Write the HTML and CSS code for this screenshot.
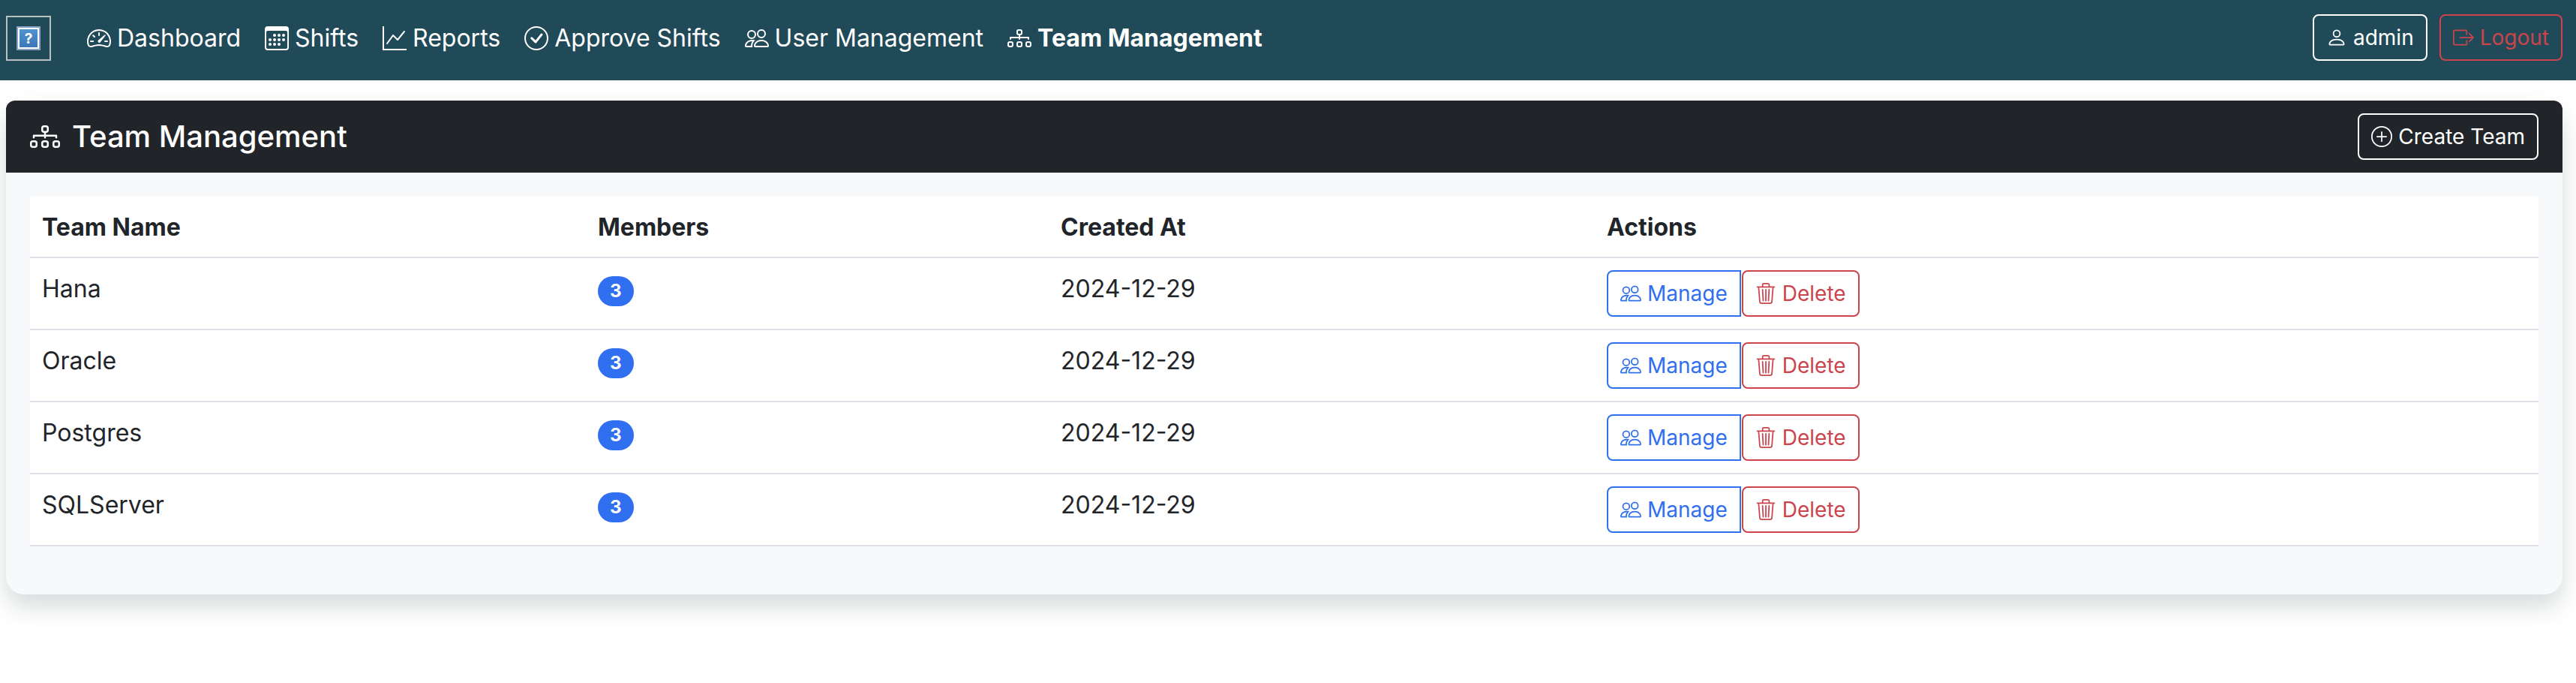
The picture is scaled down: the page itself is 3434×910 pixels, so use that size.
FILE: index.html
```html
<!DOCTYPE html>
<html lang="en">
<head>
  <meta charset="UTF-8">
  <title>Team Management</title>
  <link rel="stylesheet" href="styles.css">
</head>
<body>
  <!-- icons used more than once -->
  <svg class="sprite" xmlns="http://www.w3.org/2000/svg">
    <symbol id="i-diagram" viewBox="0 0 16 16"><path fill-rule="evenodd" d="M6 3.5A1.5 1.5 0 0 1 7.5 2h1A1.5 1.5 0 0 1 10 3.5v1A1.5 1.5 0 0 1 8.5 6v1H14a.5.5 0 0 1 .5.5v1a.5.5 0 0 1-1 0V8h-5v.5a.5.5 0 0 1-1 0V8h-5v.5a.5.5 0 0 1-1 0v-1A.5.5 0 0 1 2 7h5.5V6A1.5 1.5 0 0 1 6 4.5v-1zM8.5 5a.5.5 0 0 0 .5-.5v-1a.5.5 0 0 0-.5-.5h-1a.5.5 0 0 0-.5.5v1a.5.5 0 0 0 .5.5h1zM0 11.5A1.5 1.5 0 0 1 1.5 10h1A1.5 1.5 0 0 1 4 11.5v1A1.5 1.5 0 0 1 2.5 14h-1A1.5 1.5 0 0 1 0 12.5v-1zm1.5-.5a.5.5 0 0 0-.5.5v1a.5.5 0 0 0 .5.5h1a.5.5 0 0 0 .5-.5v-1a.5.5 0 0 0-.5-.5h-1zm4.5.5A1.5 1.5 0 0 1 7.5 10h1a1.5 1.5 0 0 1 1.5 1.5v1A1.5 1.5 0 0 1 8.5 14h-1A1.5 1.5 0 0 1 6 12.5v-1zm1.5-.5a.5.5 0 0 0-.5.5v1a.5.5 0 0 0 .5.5h1a.5.5 0 0 0 .5-.5v-1a.5.5 0 0 0-.5-.5h-1zm4.5.5a1.5 1.5 0 0 1 1.5-1.5h1a1.5 1.5 0 0 1 1.5 1.5v1a1.5 1.5 0 0 1-1.5 1.5h-1a1.5 1.5 0 0 1-1.5-1.5v-1zm1.5-.5a.5.5 0 0 0-.5.5v1a.5.5 0 0 0 .5.5h1a.5.5 0 0 0 .5-.5v-1a.5.5 0 0 0-.5-.5h-1z"/></symbol>
    <symbol id="i-people" viewBox="0 0 16 16"><path d="M15 14s1 0 1-1-1-4-5-4-5 3-5 4 1 1 1 1h8Zm-7.978-1A.261.261 0 0 1 7 12.996c.001-.264.167-1.03.76-1.72C8.312 10.629 9.282 10 11 10c1.717 0 2.687.63 3.24 1.276.593.69.758 1.457.76 1.72l-.008.002a.274.274 0 0 1-.014.002H7.022ZM11 7a2 2 0 1 0 0-4 2 2 0 0 0 0 4Zm3-2a3 3 0 1 1-6 0 3 3 0 0 1 6 0ZM6.936 9.28a5.88 5.88 0 0 0-1.23-.247A7.35 7.35 0 0 0 5 9c-4 0-5 3-5 4 0 .667.333 1 1 1h4.216A2.238 2.238 0 0 1 5 13c0-1.01.377-2.042 1.09-2.904.243-.294.526-.569.846-.816ZM4.92 10A5.493 5.493 0 0 0 4 13H1c0-.26.164-1.03.76-1.724.545-.636 1.492-1.256 3.16-1.275ZM1.5 5.5a3 3 0 1 1 6 0 3 3 0 0 1-6 0Zm3-2a2 2 0 1 0 0 4 2 2 0 0 0 0-4Z"/></symbol>
    <symbol id="i-trash" viewBox="0 0 16 16"><path d="M6.5 1h3a.5.5 0 0 1 .5.5v1H6v-1a.5.5 0 0 1 .5-.5ZM11 2.5v-1A1.5 1.5 0 0 0 9.5 0h-3A1.5 1.5 0 0 0 5 1.5v1H1.5a.5.5 0 0 0 0 1h.538l.853 10.66A2 2 0 0 0 4.885 16h6.23a2 2 0 0 0 1.994-1.84l.853-10.66h.538a.5.5 0 0 0 0-1H11Zm1.958 1-.846 10.58a1 1 0 0 1-.997.92h-6.23a1 1 0 0 1-.997-.92L3.042 3.5h9.916Zm-7.487 1a.5.5 0 0 1 .528.47l.5 8.5a.5.5 0 0 1-.998.06L5 5.03a.5.5 0 0 1 .47-.53Zm5.058 0a.5.5 0 0 1 .47.53l-.5 8.5a.5.5 0 1 1-.998-.06l.5-8.5a.5.5 0 0 1 .528-.47ZM8 4.5a.5.5 0 0 1 .5.5v8.5a.5.5 0 0 1-1 0V5a.5.5 0 0 1 .5-.5Z"/></symbol>
  </svg>

  <nav class="navbar">
    <a class="brand" href="#">
      <svg class="brand-img" viewBox="0 0 32 32" xmlns="http://www.w3.org/2000/svg">
        <defs>
          <linearGradient id="brokenBlue" x1="0" y1="0" x2="0" y2="1">
            <stop offset="0" stop-color="#4f93cf"/>
            <stop offset="1" stop-color="#3a78b6"/>
          </linearGradient>
        </defs>
        <rect width="32" height="32" fill="#86a2c8"/>
        <rect x="2" y="2" width="28" height="28" fill="#fff"/>
        <rect x="4" y="4" width="24" height="24" fill="url(#brokenBlue)"/>
        <text x="16" y="23" class="brand-mark">?</text>
      </svg>
    </a>
    <ul class="nav-links">
      <li><a href="#" class="nav-link">
        <svg class="icon" viewBox="0 0 16 16"><path d="M8 4a.5.5 0 0 1 .5.5V6a.5.5 0 0 1-1 0V4.5A.5.5 0 0 1 8 4zM3.732 5.732a.5.5 0 0 1 .707 0l.915.914a.5.5 0 1 1-.708.708l-.914-.915a.5.5 0 0 1 0-.707zM2 10a.5.5 0 0 1 .5-.5h1.586a.5.5 0 0 1 0 1H2.5A.5.5 0 0 1 2 10zm9.5 0a.5.5 0 0 1 .5-.5h1.5a.5.5 0 0 1 0 1H12a.5.5 0 0 1-.5-.5zm.754-4.246a.389.389 0 0 0-.527-.02L7.547 9.31a.91.91 0 1 0 1.302 1.258l3.434-4.297a.389.389 0 0 0-.029-.518z"/><path fill-rule="evenodd" d="M0 10a8 8 0 1 1 15.547 2.661c-.442 1.253-1.845 1.602-2.932 1.25C11.309 13.488 9.475 13 8 13c-1.474 0-3.31.488-4.615.911-1.087.352-2.49.003-2.932-1.25A7.988 7.988 0 0 1 0 10zm8-7a7 7 0 0 0-6.603 9.329c.203.575.923.876 1.68.63C4.397 12.533 6.358 12 8 12s3.604.532 4.923.96c.757.245 1.477-.056 1.68-.631A7 7 0 0 0 8 3z"/></svg>
        Dashboard</a></li>
      <li><a href="#" class="nav-link">
        <svg class="icon" viewBox="0 0 16 16"><path d="M14 0H2a2 2 0 0 0-2 2v12a2 2 0 0 0 2 2h12a2 2 0 0 0 2-2V2a2 2 0 0 0-2-2zM1 3.857C1 3.384 1.448 3 2 3h12c.552 0 1 .384 1 .857v10.286c0 .473-.448.857-1 .857H2c-.552 0-1-.384-1-.857V3.857z"/><path d="M6.5 7a1 1 0 1 0 0-2 1 1 0 0 0 0 2zm3 0a1 1 0 1 0 0-2 1 1 0 0 0 0 2zm3 0a1 1 0 1 0 0-2 1 1 0 0 0 0 2zm-9 3a1 1 0 1 0 0-2 1 1 0 0 0 0 2zm3 0a1 1 0 1 0 0-2 1 1 0 0 0 0 2zm3 0a1 1 0 1 0 0-2 1 1 0 0 0 0 2zm3 0a1 1 0 1 0 0-2 1 1 0 0 0 0 2zm-9 3a1 1 0 1 0 0-2 1 1 0 0 0 0 2zm3 0a1 1 0 1 0 0-2 1 1 0 0 0 0 2zm3 0a1 1 0 1 0 0-2 1 1 0 0 0 0 2z"/></svg>
        Shifts</a></li>
      <li><a href="#" class="nav-link">
        <svg class="icon" viewBox="0 0 16 16"><path fill-rule="evenodd" d="M0 0h1v15h15v1H0V0Zm14.817 3.113a.5.5 0 0 1 .07.704l-4.5 5.5a.5.5 0 0 1-.74.037L7.06 6.767l-3.656 5.027a.5.5 0 0 1-.808-.588l4-5.5a.5.5 0 0 1 .758-.06l2.609 2.61 4.15-5.073a.5.5 0 0 1 .704-.07Z"/></svg>
        Reports</a></li>
      <li><a href="#" class="nav-link">
        <svg class="icon" viewBox="0 0 16 16"><path d="M8 15A7 7 0 1 1 8 1a7 7 0 0 1 0 14zm0 1A8 8 0 1 0 8 0a8 8 0 0 0 0 16z"/><path d="M10.97 4.97a.235.235 0 0 0-.02.022L7.477 9.417 5.384 7.323a.75.75 0 0 0-1.06 1.06L6.97 11.03a.75.75 0 0 0 1.079-.02l3.992-4.99a.75.75 0 0 0-1.071-1.05z"/></svg>
        Approve Shifts</a></li>
      <li><a href="#" class="nav-link">
        <svg class="icon"><use href="#i-people"/></svg>
        User Management</a></li>
      <li><a href="#" class="nav-link active">
        <svg class="icon"><use href="#i-diagram"/></svg>
        Team Management</a></li>
    </ul>
    <div class="nav-user">
      <a href="#" class="btn btn-white">
        <svg class="icon" viewBox="0 0 16 16"><path d="M8 8a3 3 0 1 0 0-6 3 3 0 0 0 0 6Zm2-3a2 2 0 1 1-4 0 2 2 0 0 1 4 0Zm4 8c0 1-1 1-1 1H3s-1 0-1-1 1-4 6-4 6 3 6 4Zm-1-.004c-.001-.246-.154-.986-.832-1.664C11.516 10.68 10.289 10 8 10c-2.29 0-3.516.68-4.168 1.332-.678.678-.83 1.418-.832 1.664h10Z"/></svg>
        admin</a>
      <a href="#" class="btn btn-red">
        <svg class="icon" viewBox="0 0 16 16"><path fill-rule="evenodd" d="M10 12.5a.5.5 0 0 1-.5.5h-8a.5.5 0 0 1-.5-.5v-9a.5.5 0 0 1 .5-.5h8a.5.5 0 0 1 .5.5v2a.5.5 0 0 0 1 0v-2A1.5 1.5 0 0 0 9.5 2h-8A1.5 1.5 0 0 0 0 3.5v9A1.5 1.5 0 0 0 1.5 14h8a1.5 1.5 0 0 0 1.5-1.5v-2a.5.5 0 0 0-1 0v2z"/><path fill-rule="evenodd" d="M15.854 8.354a.5.5 0 0 0 0-.708l-3-3a.5.5 0 0 0-.708.708L14.293 7.5H5.5a.5.5 0 0 0 0 1h8.793l-2.147 2.146a.5.5 0 0 0 .708.708l3-3z"/></svg>
        Logout</a>
    </div>
  </nav>

  <main class="card">
    <div class="card-header">
      <h1 class="card-title"><svg class="icon"><use href="#i-diagram"/></svg> Team Management</h1>
      <a href="#" class="btn btn-white">
        <svg class="icon" viewBox="0 0 16 16"><path d="M8 15A7 7 0 1 1 8 1a7 7 0 0 1 0 14zm0 1A8 8 0 1 0 8 0a8 8 0 0 0 0 16z"/><path d="M8 4a.5.5 0 0 1 .5.5v3h3a.5.5 0 0 1 0 1h-3v3a.5.5 0 0 1-1 0v-3h-3a.5.5 0 0 1 0-1h3v-3A.5.5 0 0 1 8 4z"/></svg>
        Create Team</a>
    </div>
    <div class="card-body">
      <table class="team-table">
        <thead>
          <tr>
            <th class="col-name">Team Name</th>
            <th class="col-members">Members</th>
            <th class="col-created">Created At</th>
            <th>Actions</th>
          </tr>
        </thead>
        <tbody>
          <tr>
            <td>Hana</td>
            <td><span class="badge">3</span></td>
            <td>2024-12-29</td>
            <td class="actions"><div class="action-group">
              <a href="#" class="btn btn-blue"><svg class="icon"><use href="#i-people"/></svg> Manage</a>
              <a href="#" class="btn btn-red"><svg class="icon"><use href="#i-trash"/></svg> Delete</a>
            </div></td>
          </tr>
          <tr>
            <td>Oracle</td>
            <td><span class="badge">3</span></td>
            <td>2024-12-29</td>
            <td class="actions"><div class="action-group">
              <a href="#" class="btn btn-blue"><svg class="icon"><use href="#i-people"/></svg> Manage</a>
              <a href="#" class="btn btn-red"><svg class="icon"><use href="#i-trash"/></svg> Delete</a>
            </div></td>
          </tr>
          <tr>
            <td>Postgres</td>
            <td><span class="badge">3</span></td>
            <td>2024-12-29</td>
            <td class="actions"><div class="action-group">
              <a href="#" class="btn btn-blue"><svg class="icon"><use href="#i-people"/></svg> Manage</a>
              <a href="#" class="btn btn-red"><svg class="icon"><use href="#i-trash"/></svg> Delete</a>
            </div></td>
          </tr>
          <tr>
            <td>SQLServer</td>
            <td><span class="badge">3</span></td>
            <td>2024-12-29</td>
            <td class="actions"><div class="action-group">
              <a href="#" class="btn btn-blue"><svg class="icon"><use href="#i-people"/></svg> Manage</a>
              <a href="#" class="btn btn-red"><svg class="icon"><use href="#i-trash"/></svg> Delete</a>
            </div></td>
          </tr>
        </tbody>
      </table>
    </div>
  </main>
</body>
</html>
```

FILE: styles.css
```css
* { box-sizing: border-box; }

html, body { min-height: 100%; }

body {
  margin: 0;
  padding-bottom: 80px;
  background: #fff;
  color: #212529;
  font-family: Inter, "Noto Sans", sans-serif;
  font-size: 32px;
  line-height: 48px;
}

a { text-decoration: none; color: inherit; }

.sprite { display: none; }

.icon {
  width: 1em;
  height: 1em;
  fill: currentColor;
  flex: none;
}

/* top bar */
.navbar {
  display: flex;
  align-items: center;
  height: 107px;
  padding: 0 18px 5px 8px;
  background: #204a58;
  color: #fff;
}

.brand {
  display: flex;
  align-items: center;
  justify-content: center;
  width: 60px;
  height: 60px;
  margin-right: 32px;
  border: 2px solid #b9c0bf;
}

.brand-img { width: 32px; height: 32px; }

.brand-mark {
  fill: #fff;
  font-size: 19px;
  font-weight: 700;
  text-anchor: middle;
}

.nav-links {
  display: flex;
  flex: 1;
  margin: 0;
  padding: 0;
  list-style: none;
}

.nav-link {
  display: flex;
  align-items: center;
  gap: 8px;
  padding: 0 16px;
}

.nav-link.active { font-weight: 700; }

.nav-user {
  display: flex;
  gap: 16px;
  margin-bottom: 2px;
}

/* buttons */
.btn {
  display: inline-flex;
  align-items: center;
  gap: 8px;
  height: 62px;
  padding: 0 16px;
  border: 2px solid currentColor;
  border-radius: 8px;
  font-size: 28px;
  line-height: 42px;
  white-space: nowrap;
}

.btn-white { color: #fff; }
.btn-red { color: #cb444c; }
.btn-blue {
  color: #306ff0;
  border-radius: 8px 0 0 8px;
}

/* card */
.card {
  margin: 27px 18px 0 8px;
  border-radius: 24px;
  background: #f8f9fa;
  box-shadow: 0 16px 32px rgba(0, 30, 30, 0.16);
}

.card-header {
  display: flex;
  align-items: center;
  justify-content: space-between;
  height: 96px;
  padding: 0 32px;
  border-radius: 12px 12px 0 0;
  background: #212529;
  color: #fff;
}

.card-title {
  display: flex;
  align-items: center;
  gap: 16px;
  margin: 0;
  font-size: 40px;
  font-weight: 500;
  line-height: 48px;
}

.card-body { padding: 32px 32px 64px; }

/* team table */
.team-table {
  width: 100%;
  border-collapse: collapse;
  background: #fff;
  text-align: left;
}

.team-table th,
.team-table td {
  padding: 17px 16px 15px;
  border-bottom: 2px solid #dee2e6;
  vertical-align: top;
}

.team-table th { font-weight: 700; }

.col-name { width: 741px; }
.col-members { width: 617px; }
.col-created { width: 728px; }

.team-table .actions { padding: 16px; }

.action-group {
  display: flex;
  gap: 1px;
}

.badge {
  display: inline-block;
  padding: 8px 16px;
  border-radius: 999px;
  background: #306ff0;
  color: #fff;
  font-size: 24px;
  font-weight: 700;
  line-height: 24px;
}
```
